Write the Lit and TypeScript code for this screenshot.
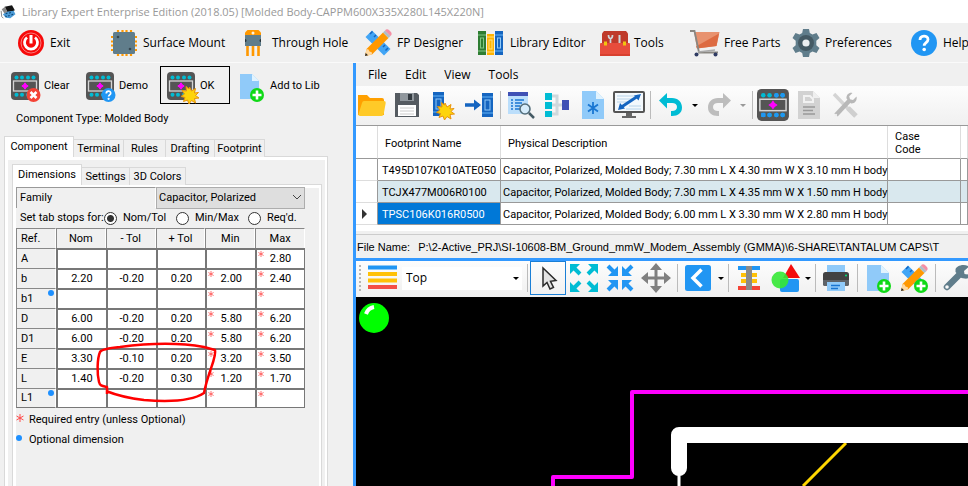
import { LitElement, html, svg, css, nothing } from "lit";
import { customElement, property } from "lit/decorators.js";
import { classMap } from "lit/directives/class-map.js";

/* ---------- shared icon fragments ---------- */

const chip = svg`
  <rect x="0" y="0" width="28" height="28" rx="4" fill="#555"/>
  <rect x="2.500" y="9" width="23" height="10" fill="#555" stroke="#d5d5d5" stroke-width="1.300"/>
  <g fill="#00bcd4"><circle cx="5.500" cy="5.500" r="2"/><circle cx="11" cy="5.500" r="2"/><circle cx="17" cy="5.500" r="2"/><circle cx="22.500" cy="5.500" r="2"/>
  <circle cx="5.500" cy="22.800" r="2"/><circle cx="11" cy="22.800" r="2"/><circle cx="17" cy="22.800" r="2"/><circle cx="22.500" cy="22.800" r="2"/></g>
  <path d="M14 10.800l1.300 1.900 1.900 1.300-1.900 1.300L14 17.200l-1.300-1.900-1.900-1.300 1.900-1.300z" fill="#f0f" stroke="#f0f"/>`;

const star = (x: number, y: number) => svg`
  <path transform="translate(${x} ${y})" d="M0-8l2 4 4-2.500-1 4.500 4-.5-3 3 3.500 2.500-4.500.5 1 4.500-4-2.500-2.500 3.500-1.500-4-4 1.500 1.500-4-4-1 3.500-2.500-2.500-3.500 4.500.5-.5-4.500 3 2.500z" fill="#fdd40c" stroke="#e8930c" stroke-width="1"/>`;

const plusBadge = (x: number, y: number) => svg`
  <circle cx=${x} cy=${y} r="7" fill="#0fd916"/>
  <path d="M${x - 4.5} ${y}h9M${x} ${y - 4.5}v9" stroke="#fff" stroke-width="2.600"/>`;

const book = svg`
  <rect x="0" y="0" width="11" height="24" fill="#1565c0"/>
  <path d="M0 4h11M0 20h11" stroke="#64b5f6"/>
  <rect x="3" y="7" width="5" height="10" fill="#1565c0" stroke="#90caf9"/>`;

const drafting = svg`
  <path d="M1.500 8L8 1.500l18.500 18.500L20 26.500z" fill="#42a5f5"/>
  <path d="M8.500 2.500l-2.500 2.500M12 6l-2 2M15.500 9.500l-2.500 2.500M21 16l-2 2M24 19l-2.500 2.500" stroke="#1565c0" stroke-width="1.500"/>
  <path d="M1 27l1.500-7L19 3.500l5.500 5.500L8 25.500z" fill="#ff9800"/>
  <path d="M1 27l1.500-7 2 .5 1 2 2.300.8.200 2.200z" fill="#ffd9a0"/>
  <path d="M1 27l.7-3 2.300 2.300z" fill="#222"/>
  <path d="M19 3.500l2-2 5.500 5.500-2 2z" fill="#b0bec5"/>
  <path d="M21 1.500c1-1.500 3-1.500 4.200-.2l1.500 1.500c1.300 1.300 1.300 3.200-.2 4.200z" fill="#f48fa5"/>`;

const page = svg`<path d="M3 1h14l8 8v18H3z" fill="#90caf9"/><path d="M17 1l8 8h-8z" fill="#e1f3fe"/>`;

const ICONS: Record<string, unknown> = {
  app: svg`<path d="M8 5l13-3 5 9-12 5z" fill="#151515"/><path d="M3 9l6-4 5 11-4 4z" fill="#888"/><path d="M5 18l9-5 10-1 3 6-9 7-8-1z" fill="#4b9bd6"/><path d="M10 17l3-1M16 16l3-1M14 21l3-1M20 19l3-1M9 21l3 1" stroke="#124a7c" stroke-width="2"/><path d="M2 12l1 10 3 3" stroke="#777" stroke-width="1.500" fill="none"/>`,
  exit: svg`<circle cx="14" cy="14" r="13" fill="#f60a0a"/><circle cx="14" cy="14" r="10" fill="none" stroke="#fa7b7b" stroke-width="1"/><path d="M10 8.500a6.500 6.500 0 1 0 8 0" fill="none" stroke="#fff" stroke-width="2.800"/><path d="M14 6v8.500" stroke="#fff" stroke-width="3"/>`,
  surface: svg`<path d="M8 1v26M12.500 1v26M16.500 1v26M21 1v26M1 8h26M1 12.500h26M1 16.500h26M1 21h26" stroke="#ff9800" stroke-width="2.200"/><rect x="3" y="3" width="22" height="22" rx="1.500" fill="#607d8b"/><circle cx="8" cy="8" r="1.300" fill="#37474f"/><circle cx="20" cy="20" r="1.300" fill="#37474f"/>`,
  through: svg`<path d="M6 8V3.500L8.500 1h11L22 3.500V8z" fill="#ff9800"/><circle cx="14" cy="4" r="1.500" fill="#fff3e0"/><path d="M8.500 17v10M14 17v10M19.500 17v10" stroke="#ff9800" stroke-width="2.600"/><rect x="6" y="6" width="16" height="11" fill="#607d8b"/><path d="M6 10a1.500 1.500 0 0 1 0 3zM22 10a1.500 1.500 0 0 0 0 3z" fill="#263238"/>`,
  drafting,
  library: svg`<rect x="1" y="2" width="8" height="24" fill="#2e7d32"/><path d="M1 6h8M1 22h8" stroke="#81c784"/><rect x="3.500" y="9" width="3" height="10" fill="none" stroke="#81c784"/><rect x="10" y="5" width="7" height="21" fill="#ffb300"/><path d="M10 8h7M10 23h7" stroke="#ffe082"/><rect x="12" y="11" width="3" height="9" fill="none" stroke="#ffe082"/><rect x="18" y="2" width="8" height="24" fill="#1565c0"/><path d="M18 6h8M18 22h8" stroke="#64b5f6"/><rect x="20.500" y="9" width="3" height="10" fill="none" stroke="#90caf9"/>`,
  toolbox: svg`<path d="M1 4.500L3 2h22l2 2.500V15H1z" fill="#bf3a2b"/><path d="M7.500 6c0 3 .8 3.500 2 3.500s2-.5 2-3.500M9.500 9v6" stroke="#cfd8dc" stroke-width="1.700" fill="none"/><path d="M18.500 6v9" stroke="#cfd8dc" stroke-width="2"/><rect x="-1" y="14" width="30" height="13" rx="1" fill="#e74c3c"/><rect x="-1" y="25" width="30" height="2" fill="#d8402f"/><rect x="3" y="12.500" width="3" height="4" fill="#f1c40f"/><rect x="22" y="12.500" width="3" height="4" fill="#f1c40f"/>`,
  cart: svg`<path d="M3 3h25.500l-3 14-19.500 2.500z" fill="#e8926f"/><path d="M28 4.500L5 17.500l1 2L25.500 17z" fill="#dd6b42"/><path d="M-1 2h4.500l4.500 21.500h19" fill="none" stroke="#8a8782" stroke-width="1.800"/><path d="M7 23l17-2" stroke="#aaa" stroke-width="1.500"/><circle cx="5.500" cy="25.500" r="2" fill="#2f3b63"/><circle cx="24.500" cy="25.500" r="2" fill="#2f3b63"/>`,
  gear: svg`<path d="M11 0h6l.8 4 2.700 1.500L24.500 4l3 5-3.200 2.800v4.400L27.500 19l-3 5-4-1.500-2.700 1.500-.8 4h-6l-.8-4-2.700-1.500-4 1.500-3-5 3.200-2.800v-4.400L.5 9l3-5 4 1.500L10.200 4z" fill="#607d8b"/><circle cx="14" cy="14" r="8" fill="#455a64"/><circle cx="14" cy="14" r="3.600" fill="#eceff1"/>`,
  help: svg`<circle cx="14" cy="14" r="13" fill="#2196f3"/><path d="M10 11c0-5 8-5 8-.5 0 3-3.800 3.200-3.800 6.200" fill="none" stroke="#fff" stroke-width="2.800"/><circle cx="14.200" cy="20.500" r="1.800" fill="#fff"/>`,

  clear: svg`${chip}<circle cx="22.500" cy="23" r="7" fill="#f44336"/><path d="M19.500 20l6 6M25.500 20l-6 6" stroke="#fff" stroke-width="2.600"/>`,
  demo: svg`${chip}<circle cx="22.500" cy="23" r="7" fill="#2196f3"/><path d="M20.300 21.500c0-3 4.400-3 4.400-.3 0 1.700-2.100 1.800-2.100 3.400" fill="none" stroke="#fff" stroke-width="1.700"/><circle cx="22.600" cy="26.800" r="1.100" fill="#fff"/>`,
  ok: svg`${chip}${star(22.5, 23)}`,
  addlib: svg`<path d="M3 2h12l7 7v18H3z" fill="#90caf9"/><path d="M15 2l7 7h-7z" fill="#e1f3fe"/>${plusBadge(20, 23)}`,

  folder: svg`<path d="M1 4h9l3 3h12q2 0 2 2v15H1z" fill="#ffa000"/><path d="M7 10h20q2 0 1.700 2l-2 11q-.3 2-2.200 2H3q-2 0-1.500-2L5 12q.4-2 2-2z" fill="#ffca28"/>`,
  save: svg`<path d="M2 2h22l2 2v22H2z" fill="#555b61"/><rect x="7" y="2" width="14" height="8" fill="#90979d"/><rect x="15" y="3" width="4" height="6" fill="#333a40"/><rect x="5" y="14" width="18" height="11" fill="#fff"/><path d="M7 17h14M7 20h14M7 23h14" stroke="#ccc"/>`,
  newfp: svg`<g transform="translate(4 1)">${book}</g>${star(16, 20)}`,
  gotolib: svg`<path d="M0 14h14" stroke="#1565c0" stroke-width="3.500"/><path d="M9 8.500l7 5.500-7 5.500z" fill="#1565c0"/><g transform="translate(17 2)">${book}</g>`,
  find: svg`<rect x="1" y="1" width="20" height="22" fill="#bbdefb"/><rect x="1" y="1" width="20" height="4" fill="#3f51b5"/><path d="M4 9h2M8 9h9M4 12h2M8 12h7M4 15h2M8 15h5M4 18h2M8 18h5" stroke="#1976d2" stroke-width="1.500"/><circle cx="18" cy="18" r="5" fill="#d6ecfb" stroke="#546e7a" stroke-width="1.600"/><path d="M22 22l5 5" stroke="#455a64" stroke-width="2.500"/>`,
  tree: svg`<path d="M9 5h5v18H9M9 14h12" fill="none" stroke="#cfd8dc" stroke-width="3"/><g fill="#00bcd4"><rect x="2" y="2" width="7" height="7"/><rect x="2" y="11" width="7" height="7"/><rect x="2" y="20" width="7" height="6"/></g><rect x="19" y="9" width="7" height="10" fill="#3f51b5"/>`,
  newdoc: svg`<path d="M3 0h14l8 8v20H3z" fill="#90caf9"/><path d="M17 0l8 8h-8z" fill="#e1f3fe"/><path d="M14 11v12M9 13.500l10 7M19 13.500l-10 7" stroke="#1976d2" stroke-width="1.800"/>`,
  monitor: svg`<rect x="-1" y="1" width="30" height="20" rx="1" fill="#f4f9fd" stroke="#555" stroke-width="2"/><path d="M2 5h18M2 8h15M2 11h12M14 15h12M11 18h15" stroke="#b8d4ea"/><path d="M5 17L23 5" stroke="#1565c0" stroke-width="3"/><path d="M3 19l2-7 5 5.500zM26 3l-7 1.500 4.500 5z" fill="#1565c0"/><path d="M11 22h6v3h4v2H7v-2h4z" fill="#666"/>`,
  undo: svg`<path d="M2 9.500L10 2v5h5c6 0 10 4 10 9.500S21 25 15 25h-1v-5h1c3 0 5-1.500 5-4s-2-4-5-4h-5v5.500z" fill="#00bcd4"/>`,
  redo: svg`<path d="M26 9.500L18 2v5h-5C7 7 3 11 3 16.500S7 25 13 25h1v-5h-1c-3 0-5-1.500-5-4s2-4 5-4h5v5.500z" fill="#bdbdbd"/>`,
  chip: svg`<g transform="translate(-2 -2) scale(1.140)">${chip}</g><g fill="#2196f3"><circle cx="17.400" cy="4.300" r="2.200"/><circle cx="23.600" cy="4.300" r="2.200"/><rect x="2.200" y="21.800" width="4.200" height="4.200"/><circle cx="10.500" cy="24" r="2.200"/><circle cx="17.400" cy="24" r="2.200"/><circle cx="23.600" cy="24" r="2.200"/></g>`,
  docgray: svg`<path d="M3 0h15l7 7v21H3z" fill="#d2d2d2"/><path d="M18 0l7 7h-7z" fill="#efefef"/><path d="M9 5h6l3 3v3H9z" fill="none" stroke="#f2f2f2" stroke-width="2"/><path d="M8 16h12M8 19.500h10M8 23h12" stroke="#999" stroke-width="1.500"/>`,
  toolsgray: svg`<path d="M3 3l21 22" stroke="#d4d4d4" stroke-width="3.500"/><path d="M17 17l8 8" stroke="#cfcfcf" stroke-width="5"/><path d="M5 24L19 9" stroke="#b8b8b8" stroke-width="4.500"/><path d="M25.500 5.500l-3.500 3.500-3-.8-.8-3L21.500 2c-3-1-6.500 1.500-6 5.500l4.500 5c4 .3 6.500-3.500 5.500-7z" fill="#b8b8b8"/><circle cx="5" cy="24" r="1.200" fill="#eee"/>`,

  layers: svg`<path d="M0 3.500h29" stroke="#2196f3" stroke-width="4"/><path d="M0 10h29M0 16.500h29" stroke="#ffc107" stroke-width="4"/><path d="M0 23h29" stroke="#f44f45" stroke-width="4"/>`,
  cursor: svg`<path d="M9 4v18l4-3.500 3 6.500 3.500-1.700-3-6 5.500-.8z" fill="#e4e4e4" stroke="#2b2b2b" stroke-width="1.500"/>`,
  expand: svg`<g fill="#00bcd4"><path d="M0 0h10L0 10zM28 0H18l10 10zM0 28h10L0 18zM28 28H18l10-10z"/><path d="M4 4l6 6M24 4l-6 6M4 24l6-6M24 24l-6-6" stroke="#00bcd4" stroke-width="4"/></g>`,
  collapse: svg`<g fill="#2196f3"><path d="M12 12H2L12 2zM16 12h10L16 2zM12 16H2l10 10zM16 16h10L16 26z"/><path d="M8 8L2 2M20 8l6-6M8 20l-6 6M20 20l6 6" stroke="#2196f3" stroke-width="4"/></g>`,
  move: svg`<path d="M14 4v20M4 14h20" stroke="#808080" stroke-width="3"/><path d="M14-1l6 7H8zM14 29l6-7H8zM-1 14l7-6v12zM29 14l-7-6v12z" fill="#808080"/>`,
  back: svg`<rect x="1" y="1" width="26" height="26" rx="2.500" fill="#2196f3"/><path d="M17.500 5.500L9 14l8.500 8.500" fill="none" stroke="#fff" stroke-width="3.500"/>`,
  stack: svg`<path d="M3 4h22" stroke="#2196f3" stroke-width="4"/><path d="M6 11h16M6 17h16" stroke="#ffc107" stroke-width="4"/><path d="M3 24h22" stroke="#f44336" stroke-width="4"/><rect x="11" y="2" width="6" height="24" fill="#8a8a8a"/>`,
  shapes: svg`<rect x="9" y="15" width="19" height="13" rx="2" fill="#2196f3"/><path d="M20 0l9 14H12z" fill="#f40d0d"/><circle cx="9" cy="16" r="8.500" fill="#35e835" opacity=".9"/>`,
  printer: svg`<rect x="5" y="1" width="18" height="9" fill="#90caf9"/><rect x="1" y="8" width="26" height="14" rx="2.500" fill="#424242"/><path d="M1 16h26v4q0 2-2 2H3q-2 0-2-2z" fill="#5f6368"/><circle cx="24" cy="11.500" r="1" fill="#00e676"/><rect x="5" y="18" width="18" height="9" fill="#90caf9"/><path d="M9 21.500h9M9 24.500h7" stroke="#1976d2" stroke-width="1.500"/>`,
  pageplus: svg`${page}${plusBadge(20, 22)}`,
  draftplus: svg`${drafting}${plusBadge(21, 22)}`,
  wrench: svg`<path d="M5 23L18 10" stroke="#607d8b" stroke-width="6.500" stroke-linecap="round"/><path d="M27 2.500l-5 4.500.5 3 3 .5 4.500-4.500c1.500 5-3 9.500-7.500 8.500l-3-.5-6-6 0-2C13 2.500 21-1 27 2.500z" fill="#607d8b"/><circle cx="5" cy="23" r="1.800" fill="#fafafa"/>`,
};

@customElement("le-icon")
export class LeIcon extends LitElement {
  @property() name = "";
  static styles = css`
    :host { display: inline-flex; flex: none; width: 28px; height: 28px; }
    svg { display: block; width: 100%; height: 100%; overflow: visible; }
  `;
  render() {
    return html`<svg viewBox="0 0 28 28" aria-hidden="true">${ICONS[this.name] ?? nothing}</svg>`;
  }
}

/* ---------- dimension panel ---------- */

interface Dim { ref: string; v: string[]; optional?: boolean; req: number[]; }

const DIMS: Dim[] = [
  { ref: "A", v: ["", "", "", "", "2.80"], req: [4] },
  { ref: "b", v: ["2.20", "-0.20", "0.20", "2.00", "2.40"], req: [3, 4] },
  { ref: "b1", v: ["", "", "", "", ""], req: [3, 4], optional: true },
  { ref: "D", v: ["6.00", "-0.20", "0.20", "5.80", "6.20"], req: [3, 4] },
  { ref: "D1", v: ["6.00", "-0.20", "0.20", "5.80", "6.20"], req: [3, 4] },
  { ref: "E", v: ["3.30", "-0.10", "0.20", "3.20", "3.50"], req: [3, 4] },
  { ref: "L", v: ["1.40", "-0.20", "0.30", "1.20", "1.70"], req: [3, 4] },
  { ref: "L1", v: ["", "", "", "", ""], req: [3, 4], optional: true },
];
const COLS = ["Nom", "- Tol", "+ Tol", "Min", "Max"];

const asterisk = html`<svg class="ast" viewBox="0 0 8 8" aria-hidden="true"><path d="M4 0v8M.5 2l7 4M7.500 2l-7 4" stroke="#ff4a4a" stroke-width="1"/></svg>`;
const dot = html`<i class="dot"></i>`;

@customElement("dimension-panel")
export class DimensionPanel extends LitElement {
  static styles = css`
    :host { display: flex; flex-direction: column; flex: 1; font: 11px/20px Roboto, Arial, sans-serif; color: #000; }
    button, input, select { font: inherit; color: inherit; margin: 0; }
    .tabs { display: flex; align-items: flex-end; margin-bottom: -1px; position: relative; }
    .tab { border: 1px solid #d9d9d9; border-left: 0; border-bottom: 0; background: #f0f0f0; height: 18px; padding: 0; line-height: 16px; text-align: center; white-space: nowrap; }
    .tab.on { border-left: 1px solid #d9d9d9; background: #fff; height: 21px; line-height: 18px; }
    .w42 { width: 42px; } .w49 { width: 49px; } .w50 { width: 50px; }
    .w56 { width: 56px; } .w48 { width: 48px; } .w70 { width: 70px; }
    .page { flex: 1; display: flex; flex-direction: column; border: 1px solid #d9d9d9; border-bottom: 0; background: #f0f0f0; box-shadow: inset 3px 3px #fff, inset -2px 0 #fff; }
    .p1 { margin-right: 25px; padding: 7px 5px 0 7px; }
    .p2 { padding: 2px 16px 0 3px; }
    .family { display: grid; grid-template-columns: 140px 1fr; height: 21px; }
    .family label { border: 1px solid #999; border-right-color: #fff; border-bottom-color: #fff; padding-left: 3px; line-height: 20px; background: #f0f0f0; }
    .pick { position: relative; display: flex; }
    .pick select { flex: 1; appearance: none; background: #dedede; border: 1px solid #adadad; border-radius: 0; padding: 0 2px; }
    .pick svg { position: absolute; right: 3px; top: 6px; width: 10px; height: 8px; pointer-events: none; }
    .stops { display: flex; align-items: center; height: 20px; padding-left: 4px; white-space: nowrap; background: #f0f0f0; }
    .stops span { flex: 0 0 84px; }
    .stops label { display: flex; align-items: center; gap: 6px; flex: 0 0 72px; }
    .stops label:last-child { flex: none; }
    input[type="radio"] { appearance: none; width: 13px; height: 13px; border: 1px solid #333; border-radius: 50%; background: #fff; flex: none; }
    input[type="radio"]:checked { background: radial-gradient(circle, #333 0 3px, #fff 4px); }
    .grid { position: relative; line-height: 18px; }
    table { width: 100%; border-collapse: separate; border-spacing: 0; table-layout: fixed; }
    col.ref { width: 40px; }
    th { font-weight: 400; height: 20px; padding: 0; box-sizing: border-box; border-top: 1px solid #888; border-left: 1px solid #888; border-right: 1px solid #fff; background: #f0f0f0; }
    tr > th:first-child { text-align: left; padding-left: 4px; position: relative; }
    td { position: relative; height: 20px; padding: 0; box-sizing: border-box; background: #fff; border-top: 2px solid #777; border-left: 2px solid #777; }
    td:last-child { border-right: 1px solid #777; }
    tr:last-child td, tr:last-child th { border-bottom: 1px solid #777; }
    td input { display: block; box-sizing: border-box; width: 100%; height: 17px; border: 0; padding: 0; background: transparent; text-align: center; outline-offset: -1px; }
    .ast { width: 8px; height: 8px; flex: none; }
    td .ast { position: absolute; left: 1px; top: 1px; width: 6px; height: 6px; }
    .dot { width: 6px; height: 6px; border-radius: 50%; background: #1e90ff; flex: none; }
    th .dot { position: absolute; right: 1px; top: 1px; }
    .mark { position: absolute; left: 0; top: 0; width: 100%; height: 100%; overflow: visible; pointer-events: none; }
    .legend { margin: 0; padding: 2px 0 0; list-style: none; }
    .legend li { display: grid; grid-template-columns: 13px auto; align-items: center; height: 20px; }
    .legend .ast, .legend .dot { margin-bottom: 5px; }
  `;

  render() {
    return html`
      <div class="tabs" role="tablist">
        <button class="tab on w70" role="tab" aria-selected="true">Component</button>
        <button class="tab w50" role="tab">Terminal</button>
        <button class="tab w42" role="tab">Rules</button>
        <button class="tab w49" role="tab">Drafting</button>
        <button class="tab w50" role="tab">Footprint</button>
      </div>
      <div class="page p1">
        <div class="tabs" role="tablist">
          <button class="tab on w70" role="tab" aria-selected="true">Dimensions</button>
          <button class="tab w48" role="tab">Settings</button>
          <button class="tab w56" role="tab">3D Colors</button>
        </div>
        <div class="page p2">
          <div class="family">
            <label for="family">Family</label>
            <div class="pick">
              <select id="family"><option>Capacitor, Polarized</option></select>
              <svg viewBox="0 0 10 8" aria-hidden="true"><path d="M1 2l4 4 4-4" fill="none" stroke="#444"/></svg>
            </div>
          </div>
          <div class="stops" role="radiogroup" aria-labelledby="stops">
            <span id="stops">Set tab stops for:</span>
            <label><input type="radio" name="s" checked />Nom/Tol</label>
            <label><input type="radio" name="s" />Min/Max</label>
            <label><input type="radio" name="s" />Req'd.</label>
          </div>
          <div class="grid">
            <table>
              <colgroup><col class="ref" /><col span="5" /></colgroup>
              <tr><th scope="col">Ref.</th>${COLS.map((c) => html`<th scope="col">${c}</th>`)}</tr>
              ${DIMS.map((d) => html`<tr>
                <th scope="row">${d.ref}${d.optional ? dot : nothing}</th>
                ${d.v.map((v, i) => html`<td>${d.req.includes(i) ? asterisk : nothing}<input .value=${v} aria-label="${d.ref} ${COLS[i]}" /></td>`)}
              </tr>`)}
            </table>
            <svg class="mark" aria-hidden="true">
              <path d="M91 166v-7C86 158 84 158 83 154 81 146 81 131 84 124c2-3 9-4 20-5 30-4 62-4 84 0l11 3c2 7-7 22-11 43-12 8-36 9-60 7-17-2-28-5-38-9" fill="none" stroke="#f00" stroke-width="2.500" stroke-linejoin="round"/>
            </svg>
          </div>
          <ul class="legend">
            <li>${asterisk}Required entry (unless Optional)</li>
            <li>${dot}Optional dimension</li>
          </ul>
        </div>
      </div>`;
  }
}

/* ---------- application shell ---------- */

const MAIN = [
  ["exit", "Exit"], ["surface", "Surface Mount"], ["through", "Through Hole"], ["drafting", "FP Designer"],
  ["library", "Library Editor"], ["toolbox", "Tools"], ["cart", "Free Parts"], ["gear", "Preferences"], ["help", "Help"],
];
const ACTIONS = [["clear", "Clear"], ["demo", "Demo"], ["ok", "OK"], ["addlib", "Add to Lib"]];
const FILEBAR = ["folder", "save", "newfp", "gotolib", "|", "find", "tree", "newdoc", "monitor", "|", "undo", "v", "redo", "x", "|", "chip", "docgray", "toolsgray"];
const VIEWBAR = ["expand", "collapse", "move", "|", "back", "v", "|", "stack", "shapes", "v", "|", "printer", "|", "pageplus", "draftplus", "|", "wrench"];
const PARTS = [
  ["T495D107K010ATE050", "Capacitor, Polarized, Molded Body; 7.30 mm L X 4.30 mm W X 3.10 mm H body"],
  ["TCJX477M006R0100", "Capacitor, Polarized, Molded Body; 7.30 mm L X 4.35 mm W X 1.50 mm H body"],
  ["TPSC106K016R0500", "Capacitor, Polarized, Molded Body; 6.00 mm L X 3.30 mm W X 2.80 mm H body"],
];

@customElement("app-root")
export class AppRoot extends LitElement {
  static styles = css`
    :host { display: flex; flex-direction: column; min-height: 100vh; overflow: hidden; background: #f0f0f0; color: #000; font: 12px/16px "Open Sans", "Noto Sans", sans-serif; }
    button, select { font: inherit; color: inherit; margin: 0; }
    button { background: none; border: 0; padding: 0; white-space: nowrap; }
    .title { display: flex; align-items: center; gap: 6px; height: 23px; background: #fff; color: #999; font-size: 11px; white-space: nowrap; }
    .title le-icon { width: 16px; height: 16px; }
    .title h1 { font: inherit; margin: 0; }
    .main { display: grid; grid-template-columns: 93px 129px 125px 113px 124px 90px 101px 118px auto; height: 39px; padding-left: 17px; border-bottom: 1px solid #fafafa; }
    .main button { display: flex; align-items: center; gap: 5px; }
    .work { flex: 1; display: grid; grid-template-columns: 353px minmax(0, 1fr); }
    .left { display: flex; flex-direction: column; padding-left: 4px; font: 11px/16px Roboto, Arial, sans-serif; }
    .actions { display: grid; grid-template-columns: 75px 81px 70px auto; padding-top: 3px; }
    .actions button { display: flex; align-items: center; gap: 5px; height: 38px; padding: 2px 7px 0; }
    .actions .ok { border: 1px solid #000; padding: 2px 6px 0; }
    .type { margin: 7px 0 9px; padding-left: 12px; }
    .right { display: flex; flex-direction: column; border-left: 3px solid #3399ff; min-width: 0; }
    .menu { display: flex; gap: 18px; padding-left: 12px; height: 23px; align-items: center; }
    .bar { display: flex; align-items: center; background: linear-gradient(#fdfdfd, #f0f0f0); overflow: hidden; }
    .bar button { flex: none; display: flex; padding: 0 4px; }
    .bar button.first { padding-left: 1px; }
    .bar .drop { width: 9px; padding: 0; justify-content: center; }
    .filebar .drop { width: 12px; }
    .filebar { height: 38px; padding-bottom: 1px; border-bottom: 1px solid #999; }
    .drop::before { content: ""; border: 3px solid transparent; border-top-color: #000; border-bottom: 0; }
    .drop.off::before { border-top-color: #999; }
    .sep { flex: none; width: 1px; height: 28px; margin: 0 2px 0 3px; background: #bbb; }
    .parts { width: 100%; border-collapse: separate; border-spacing: 0; table-layout: fixed; background: #fff; font: 11px/13px Roboto, Arial, sans-serif; }
    .parts th, .parts td { box-sizing: border-box; padding: 0 0 0 2px; font-weight: 400; text-align: left; white-space: nowrap; border-right: 1px solid #999; border-bottom: 1px solid #999; }
    .parts th { height: 33px; padding: 2px 7px 0; border-right-color: #ddd; white-space: normal; }
    .parts td { height: 22px; padding-top: 1px; }
    .parts td:first-child { border-bottom-color: #ddd; background: #fff; }
    .parts .name { padding-left: 4px; }
    .alt td { background: #d9e8ee; }
    .parts .sel { background: #0078d7; color: #fff; }
    .c0 { width: 22px; } .c1 { width: 123px; } .c2 { width: 387px; } .c3 { width: 73px; }
    .now { display: block; margin-left: 4px; width: 0; border: 5px solid transparent; border-left-color: #333; border-right: 0; }
    .gap { height: 9px; background: linear-gradient(#fff 6px, #f0f0f0 6px); border-bottom: 1px solid #ccc; }
    .file { display: flex; gap: 8px; height: 23px; align-items: center; padding-left: 1px; font: 11px/16px "Liberation Sans", Arial, sans-serif; white-space: nowrap; overflow: hidden; border-bottom: 3px solid #3399ff; }
    .viewbar { height: 34px; padding-bottom: 2px; }
    .grip { flex: none; width: 2px; height: 26px; margin: 0 7px 0 3px; background: repeating-linear-gradient(#b5b5b5 0 2px, transparent 2px 4px); }
    .layer { position: relative; flex: none; display: flex; width: 120px; height: 23px; margin: 0 2px 0 6px; }
    .layer select { appearance: none; width: 100%; background: #fff; border: 0; border-radius: 0; padding: 0 4px; }
    .layer i { position: absolute; right: 3px; top: 10px; border: 3px solid transparent; border-top-color: #000; border-bottom: 0; pointer-events: none; }
    .bar .picked { border: 1px solid #1a7fd6; padding: 2px 3px; }
    .canvas { flex: 1; min-height: 180px; position: relative; background: #000; }
    .canvas svg { position: absolute; inset: 0; width: 100%; height: 100%; }
  `;

  private bar(items: string[], first = false) {
    return items.map((n, i) =>
      n === "|" ? html`<span class="sep"></span>`
        : n === "v" || n === "x" ? html`<button class=${classMap({ drop: true, off: n === "x" })} aria-label="More"></button>`
          : html`<button class=${classMap({ first: first && i === 0 })} aria-label=${n}><le-icon name=${n}></le-icon></button>`);
  }

  render() {
    return html`
      <header class="title"><le-icon name="app"></le-icon><h1>Library Expert Enterprise Edition (2018.05) [Molded Body-CAPPM600X335X280L145X220N]</h1></header>
      <nav class="main">${MAIN.map(([i, t]) => html`<button><le-icon name=${i}></le-icon>${t}</button>`)}</nav>
      <div class="work">
        <section class="left">
          <div class="actions">${ACTIONS.map(([i, t]) => html`<button class=${classMap({ ok: i === "ok" })}><le-icon name=${i}></le-icon>${t}</button>`)}</div>
          <p class="type">Component Type: Molded Body</p>
          <dimension-panel></dimension-panel>
        </section>
        <section class="right">
          <nav class="menu">${["File", "Edit", "View", "Tools"].map((t) => html`<button>${t}</button>`)}</nav>
          <div class="bar filebar">${this.bar(FILEBAR, true)}</div>
          <table class="parts">
            <colgroup><col class="c0" /><col class="c1" /><col class="c2" /><col class="c3" /><col /></colgroup>
            <tr><th></th><th>Footprint Name</th><th>Physical Description</th><th>Case<br />Code</th><th></th></tr>
            ${PARTS.map(([n, d], i) => html`<tr class=${classMap({ alt: i === 1 })}>
              <td>${i === 2 ? html`<i class="now"></i>` : nothing}</td>
              <td class=${classMap({ name: true, sel: i === 2 })}>${n}</td><td>${d}</td><td></td><td></td></tr>`)}
          </table>
          <div class="gap"></div>
          <div class="file"><span>File Name:</span><span>P:\\2-Active_PRJ\\SI-10608-BM_Ground_mmW_Modem_Assembly (GMMA)\\6-SHARE\\TANTALUM CAPS\\T</span></div>
          <div class="bar viewbar">
            <span class="grip"></span>
            <le-icon name="layers"></le-icon>
            <div class="layer"><select aria-label="Layer"><option>Top</option></select><i></i></div>
            <span class="sep"></span>
            <button class="picked" aria-label="Select"><le-icon name="cursor"></le-icon></button>
            ${this.bar(VIEWBAR)}
          </div>
          <div class="canvas">
            <svg aria-label="Footprint drawing">
              <circle cx="18" cy="21" r="15" fill="#0f0"/>
              <path d="M10 17q2-6 8-7" fill="none" stroke="#fff" stroke-width="4"/>
              <path d="M197 300V180H276V95H4000" fill="none" stroke="#f0f" stroke-width="4" stroke-linejoin="round"/>
              <path d="M447 189L490 146" stroke="#ffd700" stroke-width="3"/>
              <path d="M323 138V400" stroke="#fff" stroke-width="3"/>
              <path d="M323 171V138H4000" fill="none" stroke="#fff" stroke-width="16" stroke-linecap="round" stroke-linejoin="round"/>
            </svg>
          </div>
        </section>
      </div>`;
  }
}
